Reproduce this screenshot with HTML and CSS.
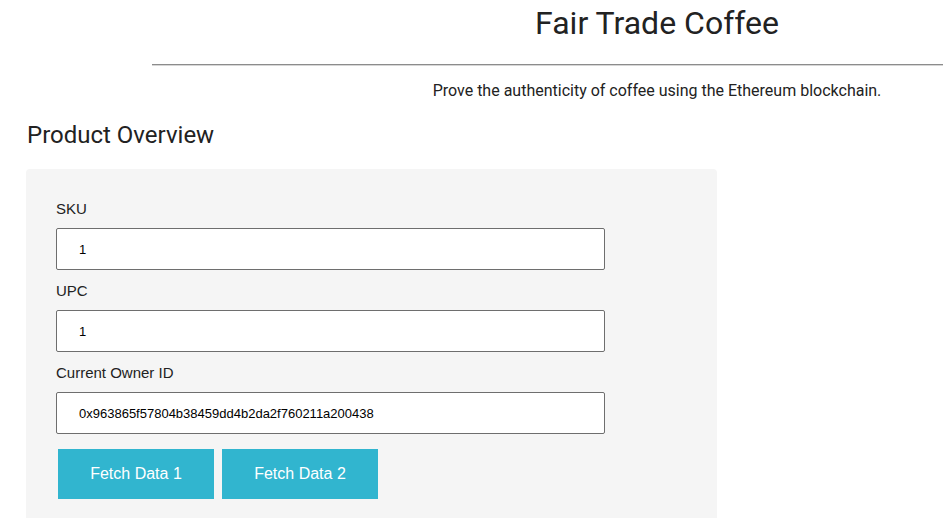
FILE: index.html
```html
<!DOCTYPE html>
<html lang="en">
<head>
<meta charset="utf-8">
<title>Fair Trade Coffee</title>
<link rel="stylesheet" href="styles.css">
</head>
<body>
<header class="header">
  <h1 class="title">Fair Trade Coffee</h1>
  <hr class="rule">
  <p class="subtitle">Prove the authenticity of coffee using the Ethereum blockchain.</p>
</header>
<main class="content">
  <h2 class="section-title">Product Overview</h2>
  <form class="panel">
    <label class="field-label" for="sku">SKU</label>
    <input class="field-input" id="sku" type="text" value="1">
    <label class="field-label" for="upc">UPC</label>
    <input class="field-input" id="upc" type="text" value="1">
    <label class="field-label" for="owner">Current Owner ID</label>
    <input class="field-input field-input-last" id="owner" type="text" value="0x963865f57804b38459dd4b2da2f760211a200438">
    <div class="actions">
      <button class="btn" type="button">Fetch Data 1</button>
      <button class="btn" type="button">Fetch Data 2</button>
    </div>
  </form>
</main>
</body>
</html>
```
FILE: styles.css
```css
html, body {
  margin: 0;
  padding: 0;
  overflow: hidden;
  background: #ffffff;
}

body {
  font-family: "Liberation Sans", Arial, sans-serif;
  color: #222;
  width: 943px;
}

.header {
  margin-left: 152px;
  width: 791px;
  font-family: Roboto, "Noto Sans", sans-serif;
}

.title {
  margin: 0;
  padding: 4px 0 0 219px;
  text-align: center;
  font-size: 32px;
  line-height: 38px;
  font-weight: 400;
  color: #222;
}

.rule {
  margin: 22px 0 0 0;
  border: 0;
  border-top: 1px solid #8c8c8c;
  border-bottom: 1px solid #d6d6d6;
  height: 0;
}

.subtitle {
  margin: 15px 0 0 0;
  padding-left: 219px;
  text-align: center;
  font-size: 16px;
  line-height: 19px;
  color: #222;
}

.content {
  margin-left: 26px;
}

.section-title {
  margin: 22px 0 0 1px;
  font-family: Roboto, "Noto Sans", sans-serif;
  font-size: 24px;
  line-height: 26px;
  font-weight: 400;
  color: #222;
}

.panel {
  margin-top: 21px;
  width: 691px;
  box-sizing: border-box;
  background: #f5f5f5;
  border-radius: 4px;
  padding: 31px 30px 24px 30px;
  display: flex;
  flex-direction: column;
  align-items: flex-start;
}

.field-label {
  font-size: 15px;
  line-height: 17px;
  color: #222;
  margin-bottom: 11px;
}

.field-input {
  width: 549px;
  height: 42px;
  box-sizing: border-box;
  border: 1px solid #6e6e6e;
  border-radius: 2px;
  padding: 0 0 0 22px;
  margin: 0 0 12px 0;
  font-family: "Liberation Sans", Arial, sans-serif;
  font-size: 13px;
  color: #000;
  background: #fff;
}

.field-input-last {
  margin-bottom: 15px;
}

.actions {
  display: flex;
  gap: 8px;
  padding-left: 2px;
}

.btn {
  width: 156px;
  height: 50px;
  border: 0;
  border-radius: 0;
  background: #31b5cf;
  color: #fff;
  font-family: "Liberation Sans", Arial, sans-serif;
  font-size: 16px;
  padding: 0;
}
```
